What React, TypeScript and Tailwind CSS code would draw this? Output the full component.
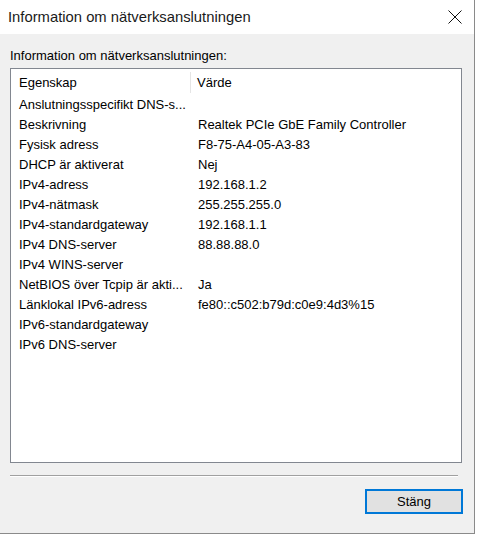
const rows: [string, string][] = [
  ['Anslutningsspecifikt DNS-s...', ''],
  ['Beskrivning', 'Realtek PCIe GbE Family Controller'],
  ['Fysisk adress', 'F8-75-A4-05-A3-83'],
  ['DHCP är aktiverat', 'Nej'],
  ['IPv4-adress', '192.168.1.2'],
  ['IPv4-nätmask', '255.255.255.0'],
  ['IPv4-standardgateway', '192.168.1.1'],
  ['IPv4 DNS-server', '88.88.88.0'],
  ['IPv4 WINS-server', ''],
  ['NetBIOS över Tcpip är akti...', 'Ja'],
  ['Länklokal IPv6-adress', 'fe80::c502:b79d:c0e9:4d3%15'],
  ['IPv6-standardgateway', ''],
  ['IPv6 DNS-server', ''],
];

export default function App() {
  return (
    <div
      className="w-[477px] h-[537px] bg-white text-[#000] overflow-hidden"
      style={{ fontFamily: '"Liberation Sans", Arial, sans-serif' }}
    >
      <div className="w-[475px] h-[534px] flex flex-col bg-[#f0f0f0] border-r border-b border-[#8a8a8a]">
        {/* title bar */}
        <div className="h-[34px] bg-white flex items-center justify-between pl-[8px] pr-[10px]">
          <span className="text-[14.8px] text-[#1a1a1a]">Information om nätverksanslutningen</span>
          <svg width="16" height="16" viewBox="0 0 16 16" className="mr-[1px]">
            <path d="M1.5 1.5 L14.5 14.5 M14.5 1.5 L1.5 14.5" stroke="#111" strokeWidth="1" />
          </svg>
        </div>

        <div className="flex flex-col px-[10px] pt-[14px]">
          <div className="text-[13px] leading-[16px] mb-[4px]">Information om nätverksanslutningen:</div>
          <div className="w-[452px] h-[395px] bg-white border border-[#828790] flex flex-col">
            <div className="h-[24px] flex items-center text-[13px] pt-[3px]">
              <div className="w-[180px] h-full pl-[8px] flex items-center border-r border-[#e5e5e5]">Egenskap</div>
              <div className="pl-[6px]">Värde</div>
            </div>
            <div className="flex flex-col pt-[2px]">
              {rows.map(([k, v]) => (
                <div key={k} className="h-[20px] flex items-center text-[13px] text-[#000]">
                  <div className="w-[180px] pl-[8px] whitespace-nowrap overflow-hidden">{k}</div>
                  <div className="pl-[7px] whitespace-nowrap">{v}</div>
                </div>
              ))}
            </div>
          </div>

          <div className="mt-[12px] w-[448px] border-t border-[#a0a0a0] border-b border-b-white" />

          <div className="flex justify-end mt-[12px] pr-[1px]">
            <button className="w-[98px] h-[25px] bg-[#e1e1e1] border-2 border-[#0078d7] text-[13px] text-black flex items-center justify-center">
              Stäng
            </button>
          </div>
        </div>
      </div>
    </div>
  );
}
